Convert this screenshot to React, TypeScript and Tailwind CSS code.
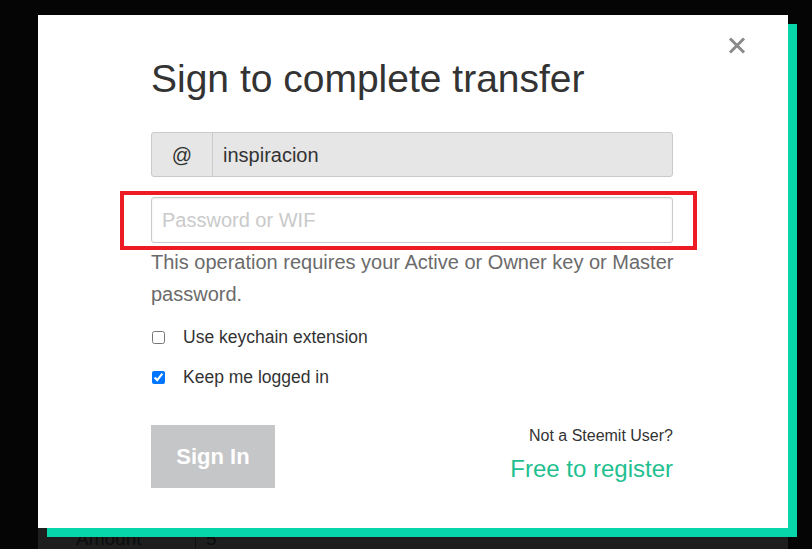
import React, { useState } from "react";

const font = { fontFamily: '"Liberation Sans", Arial, sans-serif' };

const App: React.FC = () => {
  const [keychain, setKeychain] = useState(false);
  const [keepLogged, setKeepLogged] = useState(true);

  return (
    <div className="h-[549px] w-full overflow-hidden bg-[#050505]" style={font}>
      {/* --- MODAL --- */}
      <div className="relative z-10 ml-[38px] mt-[15px] h-[513px] w-[750px] bg-white shadow-[9px_9px_0_#06d6a9]">
        <button className="absolute right-[42px] top-[21px] flex h-[18px] w-[18px] items-center justify-center">
          <svg width="18" height="17" viewBox="0 0 18 17">
            <path d="M2 1.5 L16 15.5 M16 1.5 L2 15.5" stroke="#8a8a8a" strokeWidth="3" />
          </svg>
        </button>

        <div className="flex flex-col pl-[113px] pr-[115px] pt-[44px]">
          <h3 className="text-[39px] leading-[40px] text-[#333]">Sign to complete transfer</h3>

          {/* username */}
          <div className="mt-[33px] flex h-[45px] w-[522px] rounded-[3px] border border-[#cacaca] bg-[#e6e6e6]">
            <span className="flex w-[61px] items-center justify-center border-r border-[#cacaca] text-[20px] text-[#333]">
              @
            </span>
            <input
              disabled
              value="inspiracion"
              className="flex-1 bg-transparent pl-[10px] text-[20px] text-[#333] outline-none"
              style={font}
            />
          </div>

          {/* password */}
          <input
            type="password"
            placeholder="Password or WIF"
            className="mt-[20px] h-[46px] w-[522px] rounded-[3px] border border-[#cacaca] bg-white px-[10px] text-[20px] text-[#333] shadow-[inset_0_1px_2px_rgba(0,0,0,0.08)] outline-none placeholder:text-[#cacaca]"
            style={font}
          />

          <p className="mt-[3px] w-[530px] text-[20px] leading-[32px] text-[#6b6b6b]">
            This operation requires your Active or Owner key or Master password.
          </p>

          <label className="mt-[15px] flex h-[24px] items-center gap-[18px] text-[17.5px] text-[#333]">
            <input
              type="checkbox"
              checked={keychain}
              onChange={() => setKeychain(!keychain)}
              className="ml-[1px] h-[13px] w-[13px] accent-[#0075ff]"
            />
            Use keychain extension
          </label>

          <label className="mt-[16px] flex h-[24px] items-center gap-[18px] text-[17.5px] text-[#333]">
            <input
              type="checkbox"
              checked={keepLogged}
              onChange={() => setKeepLogged(!keepLogged)}
              className="ml-[1px] h-[13px] w-[13px] accent-[#0075ff]"
            />
            Keep me logged in
          </label>

          <div className="mt-[36px] flex w-[522px] items-start justify-between">
            <button className="h-[63px] w-[124px] bg-[#c5c6c8] text-[22px] font-bold text-white">
              Sign In
            </button>
            <div className="flex flex-col items-end pt-[1px]">
              <span className="text-[16px] leading-[20px] text-[#333]">Not a Steemit User?</span>
              <a className="mt-[10px] text-[24px] leading-[26px] text-[#1fbf8f]">Free to register</a>
            </div>
          </div>
        </div>

        {/* highlight annotation */}
        <div className="pointer-events-none absolute left-[82px] top-[176px] h-[59px] w-[577px] border-[4px] border-[#ed1c24]" />
      </div>

      {/* --- BACKGROUND PAGE STRIP --- */}
      <div className="ml-[38px] flex h-[21px] w-[750px] items-start bg-[#1e1e1e] text-[19px] leading-[21px] text-[#0c0c0c]">
        <span className="w-[157px] pl-[38px]">Amount</span>
        <span className="h-full border-l border-[#111] pl-[10px]">5</span>
      </div>
    </div>
  );
};

export default App;
